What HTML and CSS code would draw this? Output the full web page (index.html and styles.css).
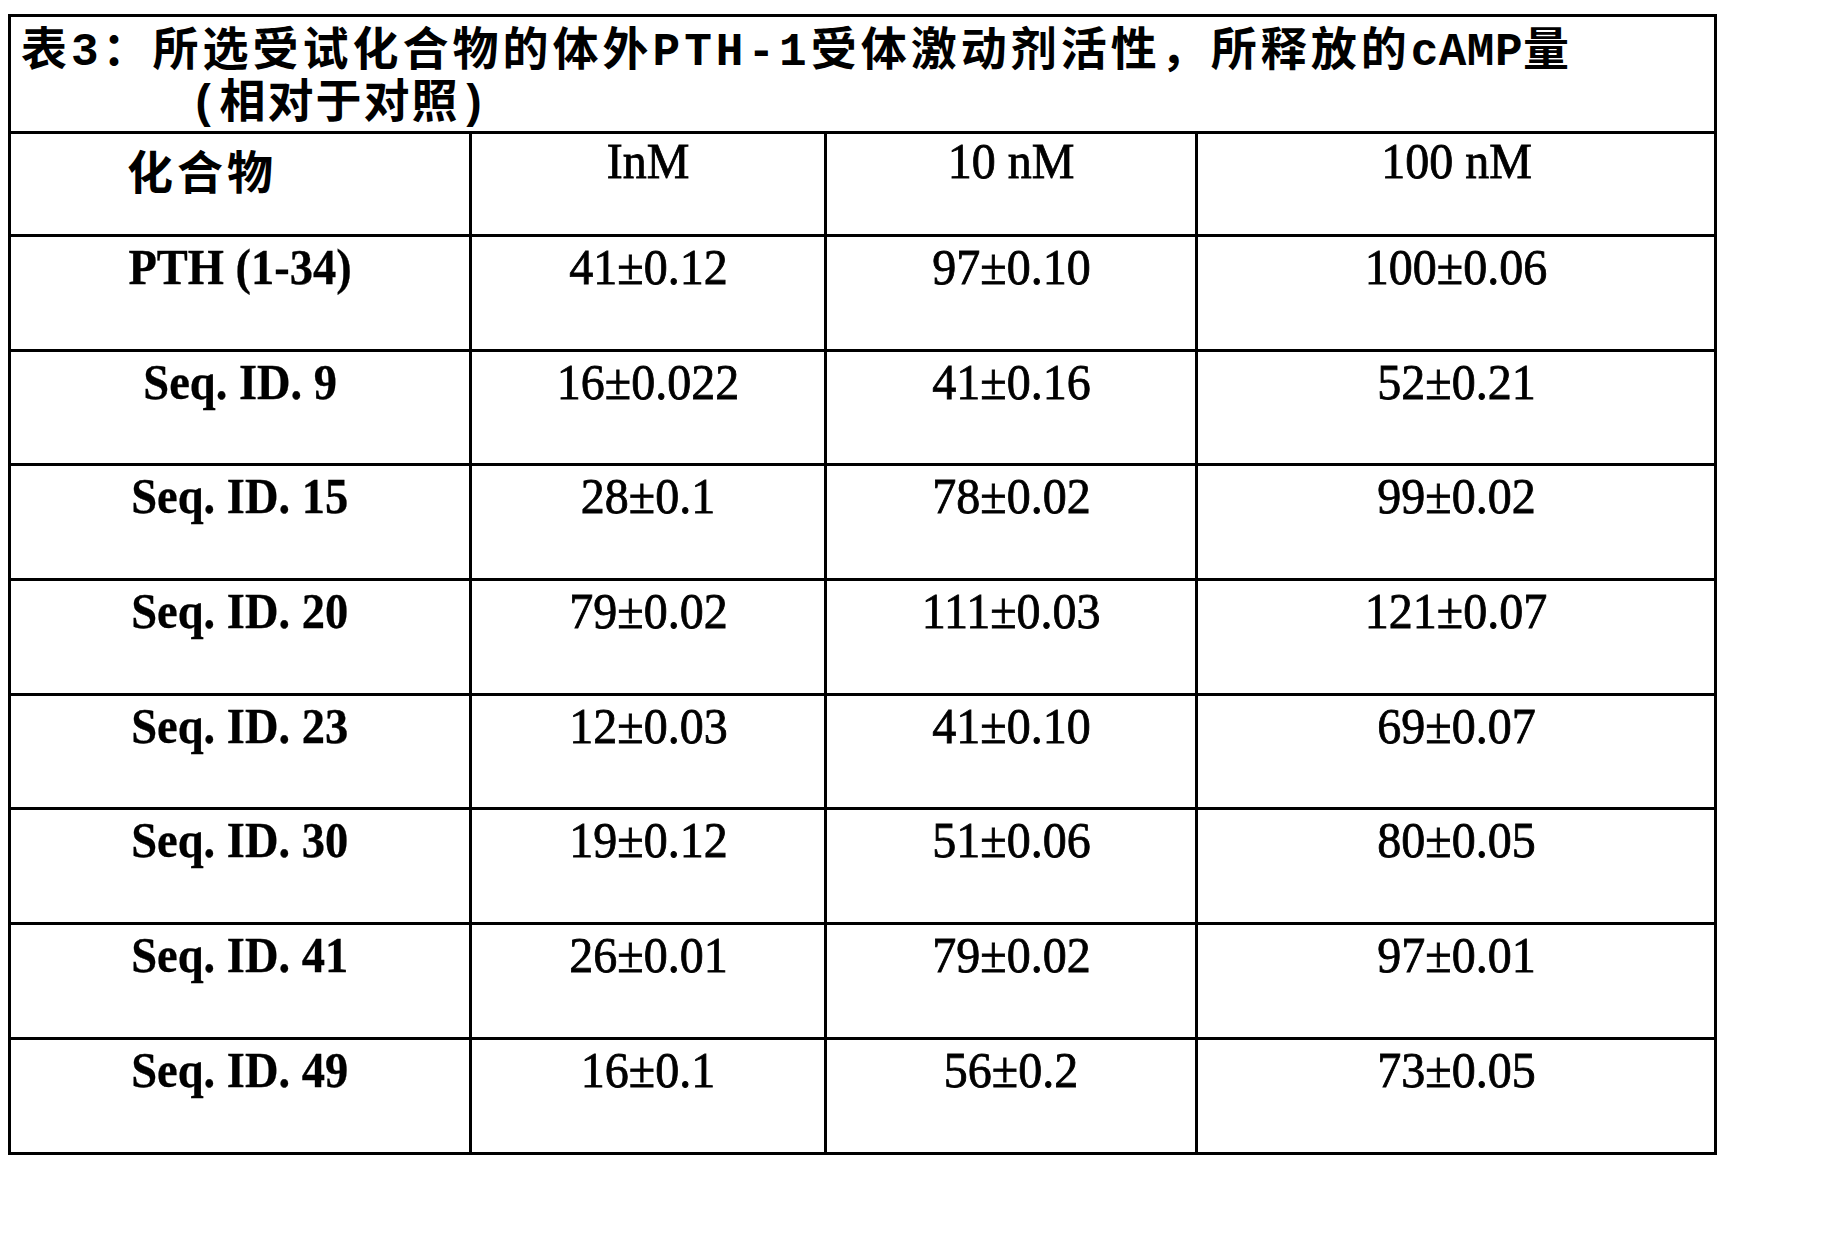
FILE: index.html
```html
<!DOCTYPE html>
<html lang="zh">
<head>
<meta charset="utf-8">
<title>表3</title>
<link rel="stylesheet" href="styles.css">
</head>
<body>
<table class="data">
  <colgroup>
    <col class="c1"><col class="c2"><col class="c3"><col class="c4">
  </colgroup>
  <tr class="title-row">
    <th colspan="4" class="title">
      <div class="t1">表3：所选受试化合物的体外PTH-1受体激动剂活性，所释放的<span class="camp">cAMP</span>量</div>
      <div class="t2">(相对于对照)</div>
    </th>
  </tr>
  <tr class="head-row">
    <th class="h-first">化合物</th>
    <th><span class="v">InM</span></th>
    <th><span class="v">10 nM</span></th>
    <th><span class="v">100 nM</span></th>
  </tr>
  <tr><td class="name"><span class="v">PTH (1-34)</span></td><td><span class="v">41±0.12</span></td><td><span class="v">97±0.10</span></td><td><span class="v">100±0.06</span></td></tr>
  <tr><td class="name"><span class="v">Seq. ID. 9</span></td><td><span class="v">16±0.022</span></td><td><span class="v">41±0.16</span></td><td><span class="v">52±0.21</span></td></tr>
  <tr><td class="name"><span class="v">Seq. ID. 15</span></td><td><span class="v">28±0.1</span></td><td><span class="v">78±0.02</span></td><td><span class="v">99±0.02</span></td></tr>
  <tr><td class="name"><span class="v">Seq. ID. 20</span></td><td><span class="v">79±0.02</span></td><td><span class="v">111±0.03</span></td><td><span class="v">121±0.07</span></td></tr>
  <tr><td class="name"><span class="v">Seq. ID. 23</span></td><td><span class="v">12±0.03</span></td><td><span class="v">41±0.10</span></td><td><span class="v">69±0.07</span></td></tr>
  <tr><td class="name"><span class="v">Seq. ID. 30</span></td><td><span class="v">19±0.12</span></td><td><span class="v">51±0.06</span></td><td><span class="v">80±0.05</span></td></tr>
  <tr><td class="name"><span class="v">Seq. ID. 41</span></td><td><span class="v">26±0.01</span></td><td><span class="v">79±0.02</span></td><td><span class="v">97±0.01</span></td></tr>
  <tr><td class="name"><span class="v">Seq. ID. 49</span></td><td><span class="v">16±0.1</span></td><td><span class="v">56±0.2</span></td><td><span class="v">73±0.05</span></td></tr>
</table>
</body>
</html>
```
FILE: styles.css
```css
html, body {
  margin: 0;
  padding: 0;
  background: #fff;
  color: #000;
}

body {
  padding: 14px 0 0 8px;
  font-family: "Liberation Serif", "Noto Sans CJK SC", serif;
}

.data {
  border-collapse: collapse;
  table-layout: fixed;
  width: 1706px;
  border: 3px solid #000;
}

.c1 { width: 461px; }
.c2 { width: 355px; }
.c3 { width: 371px; }
.c4 { width: 519px; }

.data th,
.data td {
  border: 3px solid #000;
  padding: 0;
  vertical-align: top;
  text-align: center;
}

.title-row { height: 116px; }
.head-row { height: 103px; }
.data tr:not(.title-row):not(.head-row) { height: 114.7px; }

.data .title {
  text-align: left;
  font-family: "Liberation Mono", "Noto Sans CJK SC", monospace;
  font-weight: 700;
  font-size: 46px;
  letter-spacing: 4px;
  line-height: 52px;
  padding: 10px 0 0 10px;
  white-space: nowrap;
}

.title .t2 {
  padding-left: 169px;
  letter-spacing: 2px;
}

.camp {
  letter-spacing: 0.5px;
}

.v {
  display: inline-block;
  transform: scaleX(0.96);
  transform-origin: center top;
  -webkit-text-stroke: 0.8px #000;
}

.head-row th {
  font-weight: 400;
  font-size: 50px;
  line-height: 1;
  padding-top: 2px;
}

.data .head-row .h-first {
  text-align: left;
  padding: 12px 0 0 116px;
  font-family: "Noto Sans CJK SC", sans-serif;
  font-weight: 700;
  font-size: 46px;
  letter-spacing: 4px;
}

.data td {
  font-size: 50px;
  line-height: 1;
  padding-top: 5px;
}

.data td.name {
  font-weight: 700;
}

.data td.name .v {
  transform: scaleX(0.93);
  -webkit-text-stroke: 0.3px #000;
}
```
